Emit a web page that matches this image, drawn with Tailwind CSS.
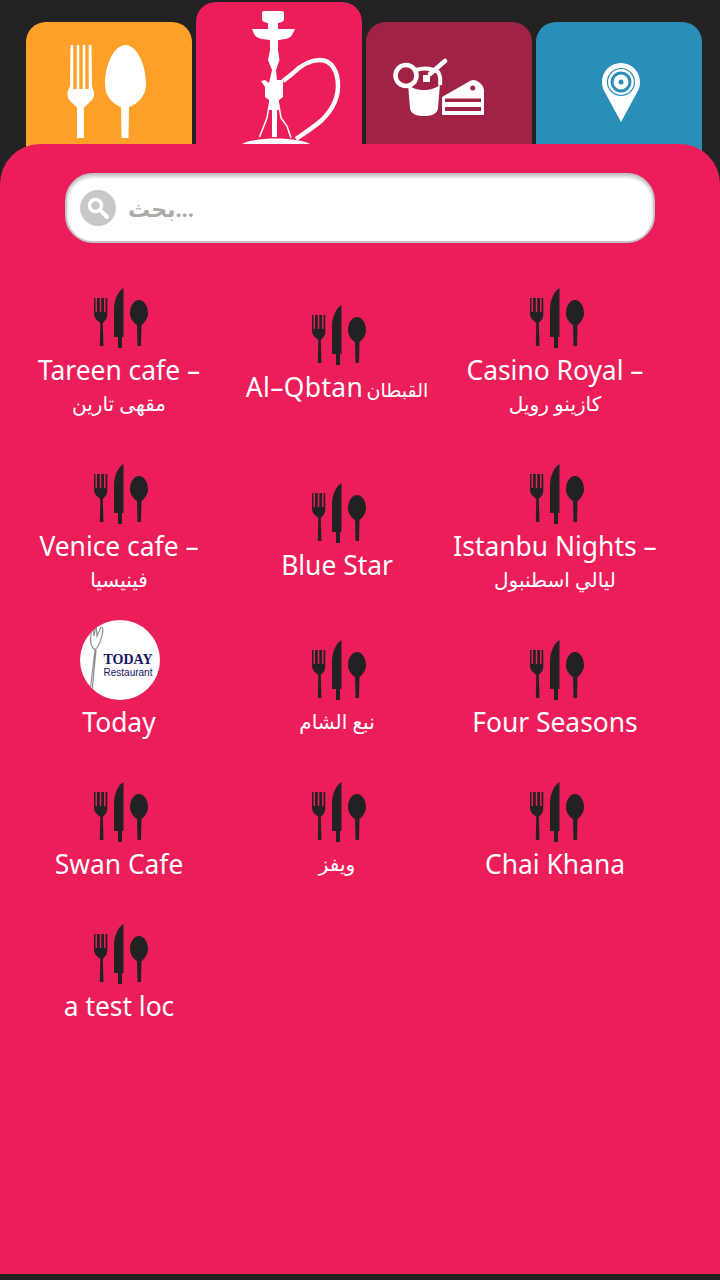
<!DOCTYPE html>
<html lang="en">
<head>
    <meta charset="UTF-8">
    <meta name="viewport" content="width=device-width, initial-scale=1.0">
    <title>Cafes</title>
    <script src="https://cdn.jsdelivr.net/npm/@tailwindcss/browser@4"></script>
</head>
<body class="bg-[#222222] h-[1280px] overflow-hidden font-['Noto_Sans','DejaVu_Sans',sans-serif] text-white">
    <!-- shared dark cutlery icon -->
    <svg class="hidden">
        <symbol id="cutlery" viewBox="79 268 80 80">
            <path fill="#222222" d="M94 298H95.500V312H97V298H99.800V312H101.300V298H104V312H105.500V298H107.300V314Q107.300 319 104.500 321L102.800 323L103.500 346H99.800L100.300 323L98 321Q94 318 94 314Z"/>
            <path fill="#222222" d="M123.500 288V337H122V348H118V337H114V310C114 300 118 291 123.500 288Z"/>
            <path fill="#222222" d="M139 300C144 300 148 306 148 313C148 319 144 323 141.500 325L141 346H137.500L137 325C134 323 130 319 130 313C130 306 134 300 139 300Z"/>
        </symbol>
    </svg>

    <!-- category tabs -->
    <div class="flex items-end h-[160px] pl-[26px] gap-1">
        <div class="w-[166px] h-[138px] bg-[#ffa028] rounded-t-[20px]">
            <svg width="166" height="122" viewBox="26 22 166 122" fill="#ffffff">
                <path d="M70.500 45H73.300V89H76.700V45H79.300V89H82.700V45H85.300V89H88.700V45H91.500L92 86L94 92V95Q94 98 91 101L84 107.500V138H77V107.500L70 101Q67.500 98 67.500 95V92L70 86Z"/>
                <path d="M125.500 45C137 45 146 65 146 84C146 97 137 104 129 107L128.500 138H121.500L121 107C113 104 105 97 105 84C105 65 114 45 125.500 45Z"/>
            </svg>
        </div>
        <div class="w-[166px] h-[158px] bg-[#ec1e5a] rounded-t-[20px]">
            <svg width="166" height="142" viewBox="196 2 166 142" fill="#ffffff">
                <path d="M264 11H282Q284 11 284 13V19Q284 21 282 22L278 23V29H295L292 35Q290 38 285 39L279 40H278V50L279.500 60L276 70L277 80H283V97L279 100V110H277V137H272V110H269V100L265 97V87L261 81L265 80L269 83L272 70L268 60L270 50V40L262 39Q256 38 254 34L252 29H268V23L264 22Q262 21 262 19V13Q262 11 264 11Z"/>
                <path fill="none" stroke="#ffffff" stroke-width="1.500" d="M269.500 103L267 118L259.500 137M278.500 103L281 118L287 126L291 138"/>
                <path fill="none" stroke="#ffffff" stroke-width="4.500" d="M283 81L292 74C300 66 310 60 320 60C332 60 338 72 338 86C338 100 332 110 322 120C314 127 306 132 296 139"/>
                <path d="M242 144C246 141 260 138.500 276 138.500S306 141 310 144Z"/>
            </svg>
        </div>
        <div class="w-[166px] h-[138px] bg-[#a02346] rounded-t-[20px]">
            <svg width="166" height="122" viewBox="366 22 166 122" fill="#ffffff">
                <circle cx="406" cy="75.500" r="10.500" fill="none" stroke="#ffffff" stroke-width="4.500"/>
                <path d="M408 84C414 92 434 92 440 84L438 108Q437 116 424 116Q411 116 410 108Z"/>
                <path fill="none" stroke="#ffffff" stroke-width="4" d="M416 70Q428 66 438 72Q441 76 440 85"/>
                <path fill="none" stroke="#ffffff" stroke-width="4.500" stroke-linecap="round" d="M430 74L445 61"/>
                <path d="M423 75H430V82H423Z"/>
                <path fill-rule="evenodd" d="M442 97L470 81Q473 79 477 81Q483 84 484 90V114Q484 115 483 115H443Q442 115 442 114ZM445 98.500V102H481V98.500ZM445 107V111H481V107Z"/>
                <circle cx="472.700" cy="88" r="2.500" fill="#a02346"/>
            </svg>
        </div>
        <div class="w-[166px] h-[138px] bg-[#2b8eb8] rounded-t-[20px]">
            <svg width="166" height="122" viewBox="536 22 166 122" fill="#ffffff">
                <path d="M621 63C631.500 63 640 71.500 640 82C640 86 638.800 89.500 637 92.500L621 122L605 92.500C603.200 89.500 602 86 602 82C602 71.500 610.500 63 621 63Z"/>
                <circle cx="621" cy="82" r="13.500" fill="none" stroke="#2b8eb8" stroke-width="1.200"/>
                <circle cx="621" cy="82" r="9" fill="none" stroke="#2b8eb8" stroke-width="3"/>
                <circle cx="621" cy="82" r="2.500" fill="#2b8eb8"/>
            </svg>
        </div>
    </div>

    <!-- main panel -->
    <div class="relative -mt-4 h-[1130px] bg-[#ec1e5a] rounded-t-[40px] pt-[29px]">
        <div class="mx-[65px] h-[70px] flex items-center gap-[12px] pl-[13px] bg-white rounded-[28px] border-2 border-[#c4c4c4] shadow-[inset_0_2px_3px_rgba(0,0,0,0.2)]">
            <svg width="36" height="36" viewBox="0 0 36 36" class="shrink-0">
                <circle cx="18" cy="18" r="18" fill="#c8c8c8"/>
                <circle cx="15.500" cy="15.500" r="6" fill="#c8c8c8" stroke="#ffffff" stroke-width="3.500"/>
                <path d="M20 20L27 27" stroke="#ffffff" stroke-width="4" stroke-linecap="round"/>
            </svg>
            <span class="text-[22px] font-bold text-[#aaaaaa]">بحث<span class="tracking-[1px]">...</span></span>
        </div>

        <div class="grid grid-cols-[repeat(3,218px)] items-center mt-[25px] mx-[10px] text-[26.4px] leading-[34px] text-center">
            <div class="pb-[23px]">
                <svg class="w-20 h-20 mx-auto"><use href="#cutlery"/></svg>
                <p class="mt-[5px]">Tareen cafe –<span class="block text-[20px]">مقهى تارين</span></p>
            </div>
            <div class="pb-[23px] pt-[3px]">
                <svg class="w-20 h-20 mx-auto"><use href="#cutlery"/></svg>
                <p class="mt-[5px] whitespace-nowrap tracking-[0.4px]">Al–Qbtan <span class="text-[19px] -ml-[4px] tracking-normal">القبطان</span></p>
            </div>
            <div class="pb-[23px]">
                <svg class="w-20 h-20 mx-auto"><use href="#cutlery"/></svg>
                <p class="mt-[5px]">Casino Royal –<span class="block text-[20px]">كازينو رويل</span></p>
            </div>

            <div class="pb-[23px]">
                <svg class="w-20 h-20 mx-auto"><use href="#cutlery"/></svg>
                <p class="mt-[5px]">Venice cafe –<span class="block text-[20px]">فينيسيا</span></p>
            </div>
            <div class="pb-[23px] pt-[3px]">
                <svg class="w-20 h-20 mx-auto"><use href="#cutlery"/></svg>
                <p class="mt-[5px]">Blue Star</p>
            </div>
            <div class="pb-[23px]">
                <svg class="w-20 h-20 mx-auto"><use href="#cutlery"/></svg>
                <p class="mt-[5px]">Istanbu Nights –<span class="block text-[20px]">ليالي اسطنبول</span></p>
            </div>

            <div class="pb-[23px]">
                <div class="w-20 h-20 ml-[70px] rounded-full bg-white flex flex-col items-center justify-center pl-[16px] pt-[10px] text-[#14145f] overflow-hidden relative">
                    <svg class="absolute left-[4px] top-[2px]" width="28" height="72" viewBox="0 0 28 72" fill="none" stroke="#8a8f94" stroke-width="1.200">
                        <path d="M11 28Q5 24 7 12L9 4L10 14L12 3L13 14L17 5Q20 5 18 13Q16 23 11 28M11 28L6 70M12 28L8 70"/>
                    </svg>
                    <span class="font-['Liberation_Serif',serif] font-bold text-[14px] leading-[14px]">TODAY</span>
                    <span class="font-['Liberation_Sans',sans-serif] text-[10px] leading-[11px]">Restaurant</span>
                </div>
                <p class="mt-[5px]">Today</p>
            </div>
            <div class="pb-[23px]">
                <svg class="w-20 h-20 mx-auto"><use href="#cutlery"/></svg>
                <p class="mt-[5px] text-[20px]">نبع الشام</p>
            </div>
            <div class="pb-[23px]">
                <svg class="w-20 h-20 mx-auto"><use href="#cutlery"/></svg>
                <p class="mt-[5px]">Four Seasons</p>
            </div>

            <div class="pb-[23px]">
                <svg class="w-20 h-20 mx-auto"><use href="#cutlery"/></svg>
                <p class="mt-[5px]">Swan Cafe</p>
            </div>
            <div class="pb-[23px]">
                <svg class="w-20 h-20 mx-auto"><use href="#cutlery"/></svg>
                <p class="mt-[5px] text-[20px]">ويفز</p>
            </div>
            <div class="pb-[23px]">
                <svg class="w-20 h-20 mx-auto"><use href="#cutlery"/></svg>
                <p class="mt-[5px]">Chai Khana</p>
            </div>

            <div class="pb-[23px]">
                <svg class="w-20 h-20 mx-auto"><use href="#cutlery"/></svg>
                <p class="mt-[5px]">a test loc</p>
            </div>
        </div>
    </div>
</body>
</html>
